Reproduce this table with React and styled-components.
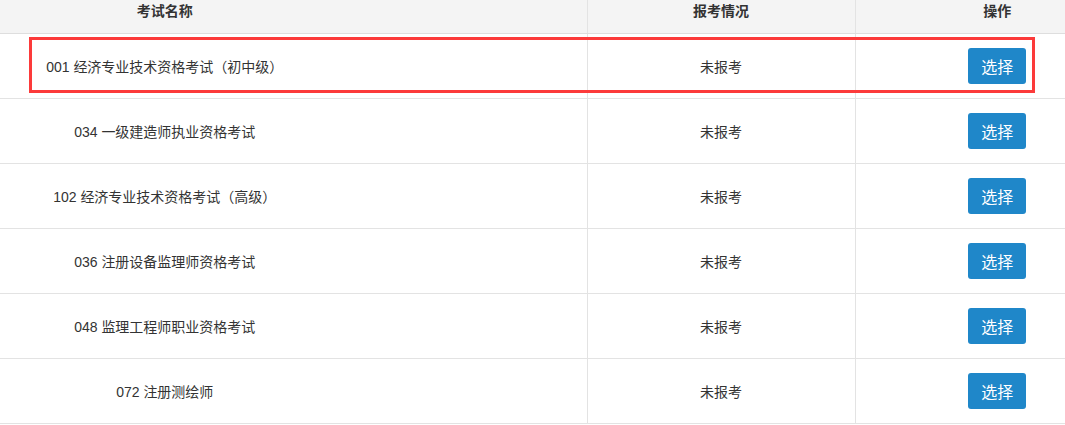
import styled, { createGlobalStyle } from "styled-components";

const exams = [
    { code: "001", name: "经济专业技术资格考试（初中级）", status: "未报考", picked: true },
    { code: "034", name: "一级建造师执业资格考试", status: "未报考" },
    { code: "102", name: "经济专业技术资格考试（高级）", status: "未报考" },
    { code: "036", name: "注册设备监理师资格考试", status: "未报考" },
    { code: "048", name: "监理工程师职业资格考试", status: "未报考" },
    { code: "072", name: "注册测绘师", status: "未报考" },
];

function App() {
  return (
    <Page>
        <GlobalStyle />
        <Table>
            <colgroup>
                <col style={{ width: 587 }} />
                <col style={{ width: 268 }} />
                <col />
            </colgroup>
            <thead>
                <tr>
                    <Th>考试名称</Th>
                    <Th divided>报考情况</Th>
                    <Th divided action>操作</Th>
                </tr>
            </thead>
            <tbody>
                {exams.map((exam) => {
                    return (
                        <Row key={exam.code}>
                            <Td>{exam.code} {exam.name}</Td>
                            <Td divided>{exam.status}</Td>
                            <Td divided action>
                                <SelectButton>选择</SelectButton>
                            </Td>
                        </Row>
                    )
                })}
            </tbody>
        </Table>
        {/* red mark around the picked exam */}
        <Highlight />
    </Page>
  )
}

const GlobalStyle = createGlobalStyle`
    body{
        margin: 0;
        background: #fff;
        font-family: "Liberation Sans", "Noto Sans CJK SC", sans-serif;
        color: #333;
    }
`;

const Page = styled.div`
    position: relative;
    width: 1065px;
`;

const Table = styled.table`
    width: 100%;
    table-layout: fixed;
    border-collapse: collapse;
    font-size: 14px;
`;

const Th = styled.th`
    height: 33px;
    padding: ${(p) => (p.action ? "0 0 0 74px" : p.divided ? "0" : "0 257px 0 0")};
    padding-bottom: 11px;
    box-sizing: border-box;
    background: #f4f4f4;
    border-bottom: 1px solid #dedede;
    border-left: ${(p) => (p.divided ? "1px solid #e3e3e3" : "none")};
    font-weight: bold;
    color: #333;
    text-align: center;
    line-height: 22px;
`;

const Row = styled.tr`
    border-bottom: 1px solid #e3e3e3;
`;

const Td = styled.td`
    height: 64px;
    padding: ${(p) => (p.action ? "0 0 0 74px" : p.divided ? "0" : "0 257px 0 0")};
    border-left: ${(p) => (p.divided ? "1px solid #e3e3e3" : "none")};
    text-align: center;
    vertical-align: middle;
    color: #333;
`;

const SelectButton = styled.button`
    width: 58px;
    height: 36px;
    border: none;
    border-radius: 3px;
    background: #1f87c9;
    color: #fff;
    font-family: "Liberation Sans", "Noto Sans CJK SC", sans-serif;
    font-size: 16px;
    cursor: pointer;
`;

const Highlight = styled.div`
    position: absolute;
    left: 29px;
    top: 37px;
    width: 1006px;
    height: 56px;
    box-sizing: border-box;
    border: 3px solid #fc3a3a;
    pointer-events: none;
`;

export default App;
